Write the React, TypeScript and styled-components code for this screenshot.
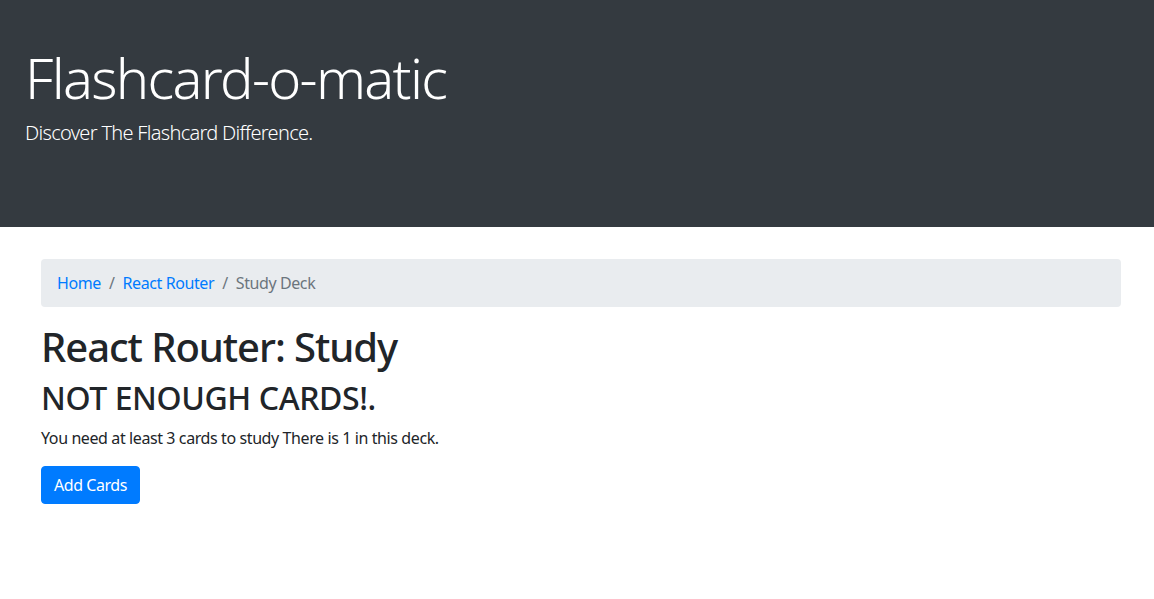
import React from "react";
import styled, { createGlobalStyle } from "styled-components";

const GlobalStyle = createGlobalStyle`
  *, *::before, *::after { box-sizing: border-box; }
  html, body { margin: 0; padding: 0; }
  body {
    font-family: "Noto Sans", "Open Sans", Arial, sans-serif;
    font-size: 16px;
    line-height: 1.5;
    color: #212529;
    background: #fff;
  }
`;

const Jumbotron = styled.header`
  background: #343a40;
  color: #fff;
  padding: 44px 0 79px 0;
  margin-bottom: 32px;
`;

const HeaderInner = styled.div`
  padding: 0 25px;
`;

const Title = styled.h1`
  margin: 0 0 7px 0;
  font-size: 56px;
  font-weight: 300;
  line-height: 1.2;
  letter-spacing: -1.7px;
`;

const Lead = styled.p`
  margin: 0;
  font-size: 20px;
  font-weight: 300;
  line-height: 1.5;
  letter-spacing: -0.7px;
`;

const Container = styled.main`
  padding: 0 33px 0 41px;
`;

const Breadcrumb = styled.ol`
  display: flex;
  flex-wrap: wrap;
  list-style: none;
  margin: 0 0 16px 0;
  padding: 12px 16px;
  background: #e9ecef;
  border-radius: 4px;
  letter-spacing: -0.4px;
`;

const Crumb = styled.li<{ $first?: boolean; $active?: boolean }>`
  color: ${(p) => (p.$active ? "#6c757d" : "#007bff")};
  ${(p) =>
    !p.$first &&
    `
    padding-left: 8px;
    &::before {
      content: "/";
      color: #6c757d;
      padding-right: 8px;
    }
  `}
`;

const CrumbLink = styled.a`
  color: #007bff;
  text-decoration: none;
`;

const PageTitle = styled.h1`
  margin: 0 0 8px 0;
  font-size: 40px;
  font-weight: 500;
  line-height: 1.2;
  letter-spacing: -1.05px;
`;

const SubTitle = styled.h2`
  margin: 0 0 8px 0;
  font-size: 32px;
  font-weight: 500;
  line-height: 1.2;
  letter-spacing: -0.4px;
`;

const Text = styled.p`
  margin: 0 0 16px 0;
  letter-spacing: -0.4px;
`;

const Button = styled.button`
  display: inline-block;
  font-family: inherit;
  font-size: 16px;
  line-height: 1.5;
  letter-spacing: -0.45px;
  padding: 6px 12px;
  color: #fff;
  background: #007bff;
  border: 1px solid #007bff;
  border-radius: 4px;
  cursor: pointer;
`;

export default function App() {
  return (
    <>
      <GlobalStyle />
      <Jumbotron>
        <HeaderInner>
          <Title>Flashcard-o-matic</Title>
          <Lead>Discover The Flashcard Difference.</Lead>
        </HeaderInner>
      </Jumbotron>
      <Container>
        <Breadcrumb>
          <Crumb $first>
            <CrumbLink href="#">Home</CrumbLink>
          </Crumb>
          <Crumb>
            <CrumbLink href="#">React Router</CrumbLink>
          </Crumb>
          <Crumb $active>Study Deck</Crumb>
        </Breadcrumb>
        <PageTitle>React Router: Study</PageTitle>
        <SubTitle>NOT ENOUGH CARDS!.</SubTitle>
        <Text>You need at least 3 cards to study There is 1 in this deck.</Text>
        <Button>Add Cards</Button>
      </Container>
    </>
  );
}
